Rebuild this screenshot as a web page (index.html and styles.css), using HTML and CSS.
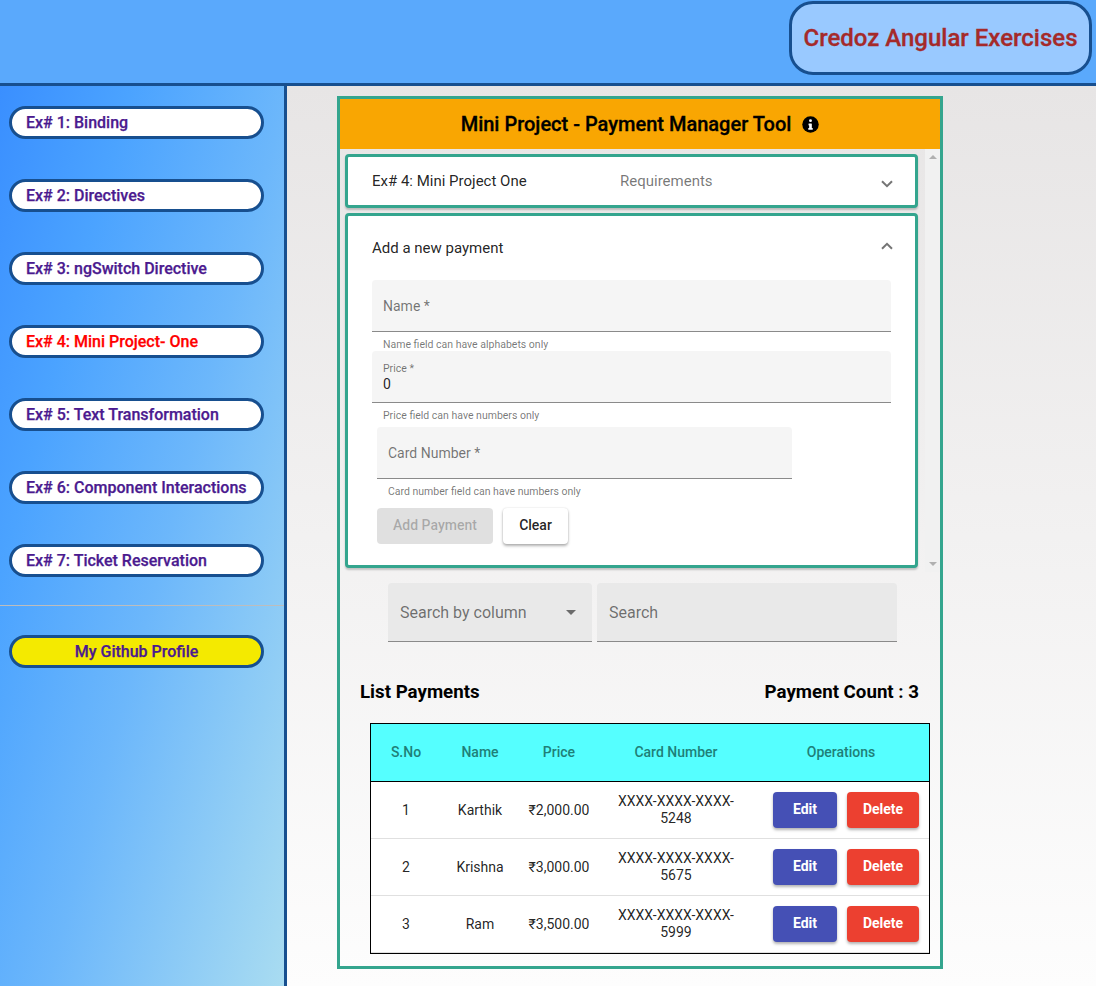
FILE: index.html
```html
<!DOCTYPE html>
<html lang="en">
<head>
<meta charset="utf-8">
<title>Credoz Angular Exercises</title>
<link rel="stylesheet" href="styles.css">
</head>
<body>
<header class="topbar">
  <div class="brand">Credoz Angular Exercises</div>
</header>
<div class="shell">
  <nav class="sidebar">
    <div class="nav-list">
      <a class="pill">Ex# 1: Binding</a>
      <a class="pill">Ex# 2: Directives</a>
      <a class="pill">Ex# 3: ngSwitch Directive</a>
      <a class="pill pill-active">Ex# 4: Mini Project- One</a>
      <a class="pill">Ex# 5: Text Transformation</a>
      <a class="pill">Ex# 6: Component Interactions</a>
      <a class="pill">Ex# 7: Ticket Reservation</a>
    </div>
    <hr class="nav-rule">
    <div class="nav-list">
      <a class="pill pill-github">My Github Profile</a>
    </div>
  </nav>
  <main class="main">
    <section class="card">
      <h1 class="card-title">
        <span>Mini Project - Payment Manager Tool</span>
        <svg class="info" viewBox="0 0 512 512" width="17" height="17" aria-hidden="true"><circle cx="256" cy="256" r="248" fill="#000"/><path fill="#fff" d="M256 96a44 44 0 1 1 0 88 44 44 0 0 1 0-88zM208 224h72a16 16 0 0 1 16 16v120h16a12 12 0 0 1 12 12v32a12 12 0 0 1-12 12H200a12 12 0 0 1-12-12v-32a12 12 0 0 1 12-12h16v-76h-8a12 12 0 0 1-12-12v-36a12 12 0 0 1 12-12z"/></svg>
      </h1>
      <div class="scroll-area">
        <div class="panels">
          <div class="panel panel-closed">
            <span class="panel-name">Ex# 4: Mini Project One</span>
            <span class="panel-desc">Requirements</span>
            <svg class="chev chev-down" viewBox="0 0 12 8" width="12" height="8" aria-hidden="true"><path d="M1 1.2l5 5 5-5" fill="none" stroke="#757575" stroke-width="2"/></svg>
          </div>
          <div class="panel panel-open">
            <div class="panel-head">
              <span class="panel-name">Add a new payment</span>
              <svg class="chev chev-up" viewBox="0 0 12 8" width="12" height="8" aria-hidden="true"><path d="M1 6.8l5-5 5 5" fill="none" stroke="#757575" stroke-width="2"/></svg>
            </div>
            <div class="field">
              <div class="field-box"><span class="placeholder">Name *</span></div>
              <div class="hint">Name field can have alphabets only</div>
            </div>
            <div class="field">
              <div class="field-box field-filled"><span class="float-label">Price *</span><span class="value">0</span></div>
              <div class="hint">Price field can have numbers only</div>
            </div>
            <div class="field field-card">
              <div class="field-box"><span class="placeholder">Card Number *</span></div>
              <div class="hint">Card number field can have numbers only</div>
            </div>
            <div class="form-actions">
              <button class="btn btn-disabled" type="button">Add Payment</button>
              <button class="btn btn-plain" type="button">Clear</button>
            </div>
          </div>
        </div>
        <div class="scrollbar"><span class="arrow-up"></span><span class="arrow-down"></span></div>
      </div>
      <div class="search-row">
        <div class="search-box search-select"><span>Search by column</span><span class="caret"></span></div>
        <div class="search-box search-input"><span>Search</span></div>
      </div>
      <div class="list-head">
        <span>List Payments</span>
        <span>Payment Count : 3</span>
      </div>
      <table class="table">
        <colgroup>
          <col class="c-no"><col class="c-name"><col class="c-price"><col class="c-card"><col class="c-ops">
        </colgroup>
        <thead>
          <tr><th>S.No</th><th>Name</th><th>Price</th><th>Card Number</th><th>Operations</th></tr>
        </thead>
        <tbody>
          <tr><td>1</td><td>Karthik</td><td>₹2,000.00</td><td>XXXX-XXXX-XXXX-5248</td><td><div class="ops"><button class="btn btn-edit" type="button">Edit</button><button class="btn btn-delete" type="button">Delete</button></div></td></tr>
          <tr><td>2</td><td>Krishna</td><td>₹3,000.00</td><td>XXXX-XXXX-XXXX-5675</td><td><div class="ops"><button class="btn btn-edit" type="button">Edit</button><button class="btn btn-delete" type="button">Delete</button></div></td></tr>
          <tr><td>3</td><td>Ram</td><td>₹3,500.00</td><td>XXXX-XXXX-XXXX-5999</td><td><div class="ops"><button class="btn btn-edit" type="button">Edit</button><button class="btn btn-delete" type="button">Delete</button></div></td></tr>
        </tbody>
      </table>
    </section>
  </main>
</div>
</body>
</html>
```
FILE: styles.css
```css
* { box-sizing: border-box; }
html, body { margin: 0; height: 100%; }
body {
  width: 1096px;
  height: 986px;
  overflow: hidden;
  font-family: Roboto, "Liberation Sans", sans-serif;
  color: rgba(0, 0, 0, 0.87);
  display: flex;
  flex-direction: column;
}
.topbar {
  height: 86px;
  flex: none;
  background: #5aa9fc;
  border-bottom: 3px solid #174f8f;
  display: flex;
  justify-content: flex-end;
  padding: 1px 4px 0 0;
}
.brand {
  width: 303px;
  height: 74px;
  background: #99c9ff;
  border: 3px solid #174f8f;
  border-radius: 24px;
  color: #a52a2a;
  font-size: 24px;
  font-weight: 500;
  -webkit-text-stroke: 0.3px #a52a2a;
  display: flex;
  align-items: center;
  justify-content: center;
}
.shell { flex: 1; display: flex; min-height: 0; }
.sidebar {
  width: 287px;
  flex: none;
  border-right: 3px solid #174f8f;
  background: linear-gradient(105deg, #3a8fff 0%, #4ba3ff 25%, #6cb7fb 55%, #a9dcf1 100%);
  padding-top: 20px;
}
.nav-list { display: flex; flex-direction: column; gap: 40px; padding: 0 20px 0 9px; }
.pill {
  height: 33px;
  border: 3px solid #174f8f;
  border-radius: 17px;
  background: #fff;
  color: #4b1a8f;
  font-size: 16px;
  font-weight: 500;
  -webkit-text-stroke: 0.25px currentColor;
  line-height: 27px;
  padding-left: 14px;
}
.pill-active { color: #f00; }
.pill-github { background: #f4ea00; text-align: center; padding-left: 0; }
.nav-rule { margin: 28px 0 29px; border: 0; border-top: 1px solid #bdbdbd; height: 1px; }
.main {
  flex: 1;
  background: linear-gradient(180deg, #e7e5e5 0%, #fdfdfd 100%);
  padding: 10px 0 0 50px;
}
.card {
  width: 606px;
  height: 873px;
  border: 3px solid #34a58e;
}
.card-title {
  margin: 0;
  height: 50px;
  background: #f9a602;
  color: #000;
  font-size: 20px;
  font-weight: 500;
  -webkit-text-stroke: 0.3px #000;
  display: flex;
  align-items: center;
  justify-content: center;
  gap: 11px;
}
.scroll-area { height: 423px; display: flex; padding-top: 5px; }
.panels { width: 573px; margin-left: 5px; display: flex; flex-direction: column; gap: 5px; }
.panel {
  background: #fff;
  border: 3px solid #34a58e;
  border-radius: 4px;
  box-shadow: 0 2px 2px rgba(0, 0, 0, 0.2);
}
.panel-closed {
  height: 54px;
  flex: none;
  display: flex;
  align-items: center;
  padding: 0 22px 0 24px;
}
.panel-name { font-size: 15px; }
.panel-closed .panel-name { width: 248px; }
.panel-desc { font-size: 15px; color: rgba(0, 0, 0, 0.54); flex: 1; }
.chev { flex: none; }
.chev-down { margin-top: 6px; }
.chev-up { margin: -4px -2px 0 0; }
.panel-open { height: 355px; flex: none; padding: 0 24px; }
.panel-head {
  height: 64px;
  display: flex;
  align-items: center;
  justify-content: space-between;
}
.field { width: 519px; }
.field-box {
  height: 52px;
  background: #f5f5f5;
  border-bottom: 1px solid #8a8a8a;
  border-radius: 4px 4px 0 0;
  padding: 0 11px;
  display: flex;
  flex-direction: column;
  justify-content: center;
  font-size: 14px;
}
.placeholder { color: rgba(0, 0, 0, 0.54); }
.float-label { font-size: 10.5px; color: rgba(0, 0, 0, 0.54); line-height: 12px; margin-top: 2px; }
.value { font-size: 14px; line-height: 18px; }
.hint { height: 19px; padding: 7px 11px 0; font-size: 10.5px; line-height: 12px; color: rgba(0, 0, 0, 0.54); }
.field-card { width: 415px; margin: 5px 0 0 5px; }
.form-actions { display: flex; gap: 10px; margin: 10px 0 0 5px; }
.btn {
  height: 36px;
  border: 0;
  border-radius: 4px;
  font-family: inherit;
  font-size: 14px;
  font-weight: 500;
  padding: 0 0 2px;
}
.btn-disabled { width: 116px; background: #e0e0e0; color: rgba(0, 0, 0, 0.26); }
.btn-plain {
  width: 65px;
  background: #fff;
  color: rgba(0, 0, 0, 0.87);
  box-shadow: 0 2px 3px rgba(0, 0, 0, 0.3), 0 0 2px rgba(0, 0, 0, 0.12);
}
.scrollbar {
  width: 15px;
  margin: -5px 0 0 7px;
  height: 423px;
  background: #f1f1f1;
  display: flex;
  flex-direction: column;
  justify-content: space-between;
  align-items: center;
  padding: 6px 0;
}
.arrow-up, .arrow-down { width: 0; height: 0; border-left: 4px solid transparent; border-right: 4px solid transparent; }
.arrow-up { border-bottom: 4px solid #b0b0b0; }
.arrow-down { border-top: 4px solid #b0b0b0; }
.search-row { display: flex; gap: 5px; margin: 11px 0 0 48px; }
.search-box {
  height: 59px;
  background: #e9e9e9;
  border-bottom: 1px solid #8a8a8a;
  border-radius: 4px 4px 0 0;
  padding: 0 12px;
  display: flex;
  align-items: center;
  justify-content: space-between;
  font-size: 16px;
  color: rgba(0, 0, 0, 0.54);
}
.search-select { width: 204px; }
.search-input { width: 300px; }
.caret { width: 0; height: 0; margin-right: 4px; border-left: 5px solid transparent; border-right: 5px solid transparent; border-top: 5px solid rgba(0, 0, 0, 0.54); }
.list-head {
  display: flex;
  justify-content: space-between;
  margin: 38px 21px 0 20px;
  font-size: 18.72px;
  font-weight: 700;
  color: #000;
  line-height: 24px;
}
.table {
  width: 560px;
  margin: 19px 0 0 30px;
  border-collapse: separate;
  border-spacing: 0;
  border: 1px solid #000;
  table-layout: fixed;
  background: #fff;
  font-size: 14px;
}
.c-no { width: 70px; }
.c-name { width: 78px; }
.c-price { width: 80px; }
.c-card { width: 154px; }
.c-ops { width: 176px; }
.table th {
  height: 58px;
  background: #55ffff;
  border-bottom: 1px solid #000;
  font-weight: 500;
  font-size: 14px;
  color: #1f7f78;
  padding: 0 0 2px;
}
.table td {
  height: 57px;
  text-align: center;
  border-bottom: 1px solid #e0e0e0;
  padding: 0 12px;
  line-height: 17px;
}
.table tr td:first-child, .table tr td:nth-child(2), .table tr td:nth-child(3) { padding: 0; }
.table td:last-child { padding: 0 0 0 10px; }
.ops { display: flex; justify-content: center; gap: 10px; }
.btn-edit, .btn-delete { color: #fff; font-weight: 700; box-shadow: 0 2px 3px rgba(0, 0, 0, 0.3); }
.btn-edit { width: 64px; background: #4550b5; }
.btn-delete { width: 72px; background: #ec4030; }
```
